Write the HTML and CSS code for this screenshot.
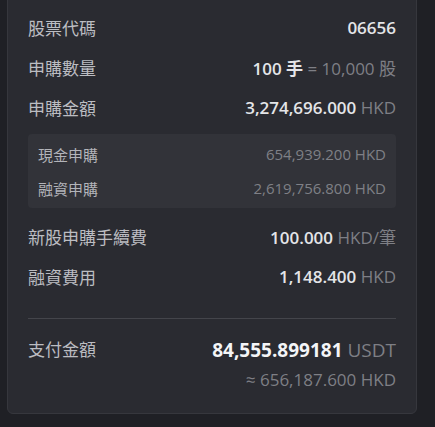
FILE: index.html
```html
<!DOCTYPE html>
<html lang="zh-Hant">
<head>
  <meta charset="UTF-8">
  <meta name="viewport" content="width=device-width, initial-scale=1.0">
  <title>申購確認</title>
  <link rel="stylesheet" href="styles.css">
</head>
<body>
  <div class="page">
    <div class="card">
      <div class="row">
        <span class="label">股票代碼</span>
        <span class="value">06656</span>
      </div>
      <div class="row">
        <span class="label">申購數量</span>
        <span class="value">100 手 <span class="unit">= 10,000 股</span></span>
      </div>
      <div class="row">
        <span class="label">申購金額</span>
        <span class="value">3,274,696.000 <span class="unit">HKD</span></span>
      </div>

      <div class="sub-box">
        <div class="sub-row">
          <span>現金申購</span>
          <span class="sub-value">654,939.200 HKD</span>
        </div>
        <div class="sub-row">
          <span>融資申購</span>
          <span class="sub-value">2,619,756.800 HKD</span>
        </div>
      </div>

      <div class="row fee">
        <span class="label">新股申購手續費</span>
        <span class="value">100.000 <span class="unit">HKD/筆</span></span>
      </div>
      <div class="row">
        <span class="label">融資費用</span>
        <span class="value">1,148.400 <span class="unit">HKD</span></span>
      </div>

      <div class="divider"></div>

      <div class="total">
        <span class="label">支付金額</span>
        <div class="total-values">
          <span class="total-main">84,555.899181 <span class="unit">USDT</span></span>
          <span class="total-alt">≈ 656,187.600 HKD</span>
        </div>
      </div>
    </div>
  </div>
</body>
</html>
```

FILE: styles.css
```css
body {
  margin: 0;
  background: #1f2025;
  font-family: "Open Sans", "Noto Sans CJK TC", sans-serif;
  color: #e4e5e8;
}
.page {
  padding: 0 18px 14px 7px;
}
.card {
  margin-top: -14px;
  background: #2a2b31;
  border: 1px solid #36373d;
  border-radius: 6px;
  padding: 20px 20px 18px;
}
.row {
  display: flex;
  justify-content: space-between;
  align-items: center;
  height: 40px;
}
.label {
  font-size: 17px;
  color: #bcbdc2;
}
.value {
  font-size: 17px;
  font-weight: 600;
  color: #e4e5e8;
}
.unit {
  font-weight: 400;
  color: #7e7f85;
}
.sub-box {
  margin: 7px 0 8px;
  background: #323339;
  border-radius: 4px;
  padding: 3px 10px;
}
.sub-row {
  display: flex;
  justify-content: space-between;
  align-items: center;
  height: 34px;
  font-size: 15px;
  color: #b3b4b9;
}
.sub-value {
  color: #7f8086;
}
.divider {
  height: 1px;
  background: #44454b;
  margin: 22px 0 16px;
}
.total {
  display: flex;
  justify-content: space-between;
  align-items: flex-start;
}
.total .label {
  line-height: 30px;
}
.total-values {
  display: flex;
  flex-direction: column;
  align-items: flex-end;
}
.total-main {
  font-size: 19px;
  font-weight: 700;
  color: #f4f5f7;
  line-height: 30px;
}
.total-alt {
  font-size: 17px;
  color: #7e7f85;
  line-height: 30px;
}
```
